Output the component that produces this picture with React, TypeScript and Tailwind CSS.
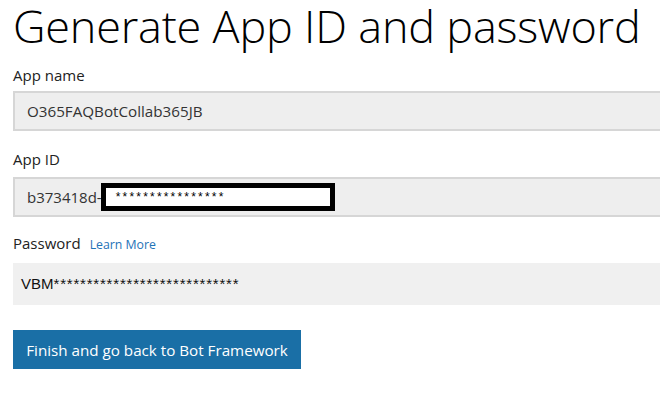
export default function App() {
  return (
    <div className="w-[660px] h-[396px] overflow-hidden bg-white font-['Open_Sans',sans-serif] text-[#222]">
      <h1 className="ml-[13px] pt-[1px] text-[45px] leading-[50px] font-light tracking-[-0.2px] text-black whitespace-nowrap">
        Generate App ID and password
      </h1>

      {/* App name */}
      <div className="mt-[14px] ml-[13px] text-[15px] leading-[20px]">App name</div>
      <div className="mt-[6px] ml-[13px] h-[40px] flex items-center bg-[#eeeeee] border-2 border-r-0 border-[#d6d6d6] pl-[12px] text-[15.2px] text-[#333]">
        O365FAQBotCollab365JB
      </div>

      {/* App ID */}
      <div className="mt-[18px] ml-[13px] text-[15px] leading-[20px]">App ID</div>
      <div className="mt-[8px] ml-[13px] h-[40px] flex items-center bg-[#eeeeee] border-2 border-r-0 border-[#d6d6d6] pl-[12px] text-[15px] text-[#333]">
        <span>b373418d-</span>
        <span className="-ml-[1px] w-[234px] h-[28px] border-[5px] border-black bg-white flex items-center pl-[10px] text-[12px] leading-none tracking-[2.2px] text-black font-['Liberation_Sans',sans-serif]">
          ****************
        </span>
      </div>

      {/* Password */}
      <div className="mt-[16px] ml-[13px] flex items-baseline gap-[9px]">
        <span className="text-[15px] leading-[20px]">Password</span>
        <span className="text-[12.3px] text-[#1f73b7]">Learn More</span>
      </div>
      <div className="mt-[9px] ml-[13px] h-[42px] flex items-center bg-[#f0f0f0] pl-[8px] text-[15px] text-[#111] font-['Liberation_Sans',sans-serif]">
        <span>VBM</span>
        <span className="tracking-[0.8px]">****************************</span>
      </div>

      <button className="mt-[25px] ml-[13px] h-[39px] w-[288px] bg-[#1a6fa6] text-white text-[15.2px] flex items-center justify-center">
        Finish and go back to Bot Framework
      </button>
    </div>
  );
}
